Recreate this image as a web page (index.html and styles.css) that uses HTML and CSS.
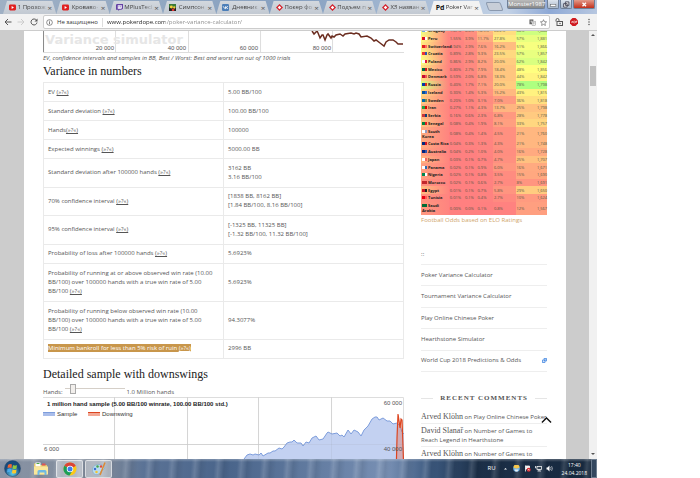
FILE: index.html
```html
<!DOCTYPE html>
<html lang="en">
<head>
<meta charset="utf-8">
<title>Poker Variance Calculator</title>
<link rel="stylesheet" href="styles.css">
</head>
<body>
<div class="desktop">
  <header class="tabbar">
    <nav class="tabs">
      <div class="tab"><svg class="fav" viewBox="0 0 12 12"><rect y="1" width="12" height="10" rx="2" fill="#e02020"/><path d="M4.5 3.5v5l4-2.500z" fill="#fff"/></svg><span class="tab-title">1 Прохож</span><button class="x" aria-label="Close">×</button></div>
      <div class="tab"><svg class="fav" viewBox="0 0 12 12"><rect y="1" width="12" height="10" rx="2" fill="#e02020"/><path d="M4.500 3.500v5l4-2.500z" fill="#fff"/></svg><span class="tab-title">Кроваво-</span><button class="x" aria-label="Close">×</button></div>
      <div class="tab"><svg class="fav" viewBox="0 0 12 12"><path d="M1 0h11v8l-3 2H6l-2 2V10H0V2z" fill="#6441a5"/><path d="M3 2h7v5L9 8H3z" fill="#fff"/><path d="M5 3v3M8 3v3" stroke="#6441a5"/></svg><span class="tab-title">MPlusTecl</span><button class="x" aria-label="Close">×</button></div>
      <div class="tab"><svg class="fav" viewBox="0 0 12 12"><rect width="12" height="12" fill="#3a7a3a"/><rect y="6" width="12" height="6" fill="#222"/><circle cx="4" cy="5" r="2.500" fill="#f4d03a"/><circle cx="9" cy="6" r="2" fill="#f4d03a"/><rect x="5" y="8" width="4" height="4" fill="#d33"/></svg><span class="tab-title">Симпсон</span><button class="x" aria-label="Close">×</button></div>
      <div class="tab"><svg class="fav" viewBox="0 0 12 12"><rect width="12" height="12" rx="2" fill="#4d7fb8"/><path d="M2 4l3 4h1V4M10 4L7 6l3 2" fill="none" stroke="#fff" stroke-width="1.500"/></svg><span class="tab-title">Дневник</span><button class="x" aria-label="Close">×</button></div>
      <div class="tab"><svg class="fav" viewBox="0 0 12 12"><path d="M6 0l6 6-6 6-6-6z" fill="#d3202a"/><path d="M6 3l3 3-3 3-3-3z" fill="#fff"/></svg><span class="tab-title">Покер фо</span><button class="x" aria-label="Close">×</button></div>
      <div class="tab"><svg class="fav" viewBox="0 0 12 12"><path d="M6 0l6 6-6 6-6-6z" fill="#d3202a"/><path d="M6 3l3 3-3 3-3-3z" fill="#fff"/></svg><span class="tab-title">Подъем п</span><button class="x" aria-label="Close">×</button></div>
      <div class="tab"><svg class="fav" viewBox="0 0 12 12"><path d="M6 0l6 6-6 6-6-6z" fill="#d3202a"/><path d="M6 3l3 3-3 3-3-3z" fill="#fff"/></svg><span class="tab-title">ХЗ назван</span><button class="x" aria-label="Close">×</button></div>
      <div class="tab active"><b class="pd">Pd</b><span class="tab-title">Poker Var</span><button class="x" aria-label="Close">×</button></div>
    </nav>
    <button class="newtab" aria-label="New tab"></button>
    <div class="winbtns">
      <button class="user">Monster1987</button>
      <button class="wb" aria-label="Minimize"><svg viewBox="0 0 12 8"><rect x="3" y="4" width="6" height="2" fill="#fff" stroke="#555" stroke-width=".5"/></svg></button>
      <button class="wb" aria-label="Restore"><svg viewBox="0 0 12 8"><path d="M5 1h4v4H5zM3 3h4v4H3z" fill="#eee" stroke="#445"/></svg></button>
      <button class="wb close" aria-label="Close window"><svg viewBox="0 0 12 8"><path d="M4 2l4 4M8 2L4 6" stroke="#fff" stroke-width="1.500"/></svg></button>
    </div>
  </header>
  <div class="toolbar">
    <button class="tool" aria-label="Back"><svg viewBox="0 0 16 16"><path d="M15 8H3M8 2L2 8l6 6" fill="none" stroke="#555" stroke-width="2"/></svg></button>
    <button class="tool" aria-label="Forward"><svg viewBox="0 0 16 16"><path d="M1 8h12M8 2l6 6-6 6" fill="none" stroke="#ccc" stroke-width="2"/></svg></button>
    <button class="tool" aria-label="Reload"><svg viewBox="0 0 16 16"><path d="M13 4.500A6 6 0 1 0 14 9" fill="none" stroke="#555" stroke-width="2"/><path d="M15 1v6H9z" fill="#555"/></svg></button>
    <div class="omnibox">
      <svg class="info" viewBox="0 0 16 16"><circle cx="8" cy="8" r="6.500" fill="none" stroke="#555" stroke-width="1.500"/><path d="M8 7v5M8 4v2" stroke="#555" stroke-width="1.800"/></svg>
      <label for="url">Не защищено</label>
      <input id="url" type="text" value="www.pokerdope.com/poker-variance-calculator/">
      <svg class="info" viewBox="0 0 16 16"><rect x="1" y="1" width="9" height="11" fill="#666"/><rect x="7" y="5" width="8" height="10" fill="#fff" stroke="#777"/><path d="M3 5h5M5.500 4v5" stroke="#fff"/><path d="M9 9h4M11 7v6" stroke="#777"/></svg>
      <svg class="info" viewBox="0 0 16 16"><path d="M8 1.500l2 4.500 5 .5-3.700 3.300 1 5L8 12.300l-4.300 2.500 1-5L1 6.500 6 6z" fill="none" stroke="#555" stroke-width="1.400"/></svg>
    </div>
    <div class="extensions">
    <button class="tool" aria-label="Unlock"><svg viewBox="0 0 16 16"><path d="M2 7V4a3 3 0 0 1 6 0v3" fill="none" stroke="#555" stroke-width="1.800"/><rect x="4" y="7" width="11" height="8" fill="none" stroke="#555" stroke-width="2"/><circle cx="10" cy="11" r="1.500" fill="#555"/></svg></button>
    <button class="tool" aria-label="Ad block"><svg viewBox="0 0 16 16"><path d="M5 0h6l5 5v6l-5 5H5l-5-5V5z" fill="#cf1a20"/><path d="M3 10l1.500-4L6 10M7.500 6v4h1.500a1 1 0 0 0 0-4zM12 10V6h1.500v2H12" fill="none" stroke="#fff"/></svg></button>
    <button class="tool" aria-label="Menu"><svg viewBox="0 0 16 16"><g fill="#555"><circle cx="8" cy="3" r="1.500"/><circle cx="8" cy="8" r="1.500"/><circle cx="8" cy="13" r="1.500"/></g></svg></button>
    </div>
  </div>

  <div class="viewport">
    <div class="paper">
      <main>
        <svg class="chart" viewBox="0 0 361 22">
          <path d="M72.500 0v21M145.500 0v21M217.500 0v21M289.500 0v21" stroke="#ddd"/>
          <path d="M.5 0v22" stroke="#888"/><path d="M0 21.500h361" stroke="#ddd"/>
          <text x="2" y="13" class="mark">Variance simulator</text>
          <g class="axis" text-anchor="end"><text x="71" y="19">20 000</text><text x="143" y="19">40 000</text><text x="215" y="19">60 000</text><text x="288" y="19">80 000</text></g>
          <path d="M269 0l2 3 3-3 1 2 2 5 2-3 1 0 2 5 2-5 1-1 3 4 1-2 2 1 2-2 4-1 3 2 2-2 6-1 3 1 2-1 3 1 2 3 6-1 4 2 3 3 2-1 4 3 4 3 2-4 3-2 4 0 3 2 2 2 5 0" fill="none" stroke="#6b2d20" stroke-width="1.500"/>
        </svg>
        <p class="note">EV, confidence intervals and samples in BB, Best / Worst: Best and worst run out of 1000 trials</p>
        <h2>Variance in numbers</h2>
        <table class="numbers">
          <tr><td>EV <a href="#ev">(»?«)</a></td><td>5.00 BB/100</td></tr>
          <tr><td>Standard deviation <a href="#sd">(»?«)</a></td><td>100.00 BB/100</td></tr>
          <tr><td>Hands<a href="#hands">(»?«)</a></td><td>100000</td></tr>
          <tr><td>Expected winnings <a href="#ew">(»?«)</a></td><td>5000.00 BB</td></tr>
          <tr><td>Standard deviation after 100000 hands <a href="#sdh">(»?«)</a></td><td>3162 BB<br>3.16 BB/100</td></tr>
          <tr><td>70% confidence interval <a href="#c70">(»?«)</a></td><td>[1838 BB, 8162 BB]<br>[1.84 BB/100, 8.16 BB/100]</td></tr>
          <tr><td>95% confidence interval <a href="#c95">(»?«)</a></td><td>[-1325 BB, 11325 BB]<br>[-1.32 BB/100, 11.32 BB/100]</td></tr>
          <tr><td>Probability of loss after 100000 hands <a href="#loss">(»?«)</a></td><td>5.6923%</td></tr>
          <tr><td>Probability of running at or above observed win rate (10.00 BB/100) over 100000 hands with a true win rate of 5.00 BB/100 <a href="#above">(»?«)</a></td><td>5.6923%</td></tr>
          <tr><td>Probability of running below observed win rate (10.00 BB/100) over 100000 hands with a true win rate of 5.00 BB/100 <a href="#below">(»?«)</a></td><td>94.3077%</td></tr>
          <tr><td><span class="picked">Minimum bankroll for less than 5% risk of ruin <a href="#ruin">(»?«)</a></span></td><td>2996 BB</td></tr>
        </table>
        <h2 class="second">Detailed sample with downswings</h2>
        <div class="hands">
          <label for="hands-range">Hands:</label>
          <input id="hands-range" type="range" min="0" max="10" value="1" step="0.1">
          <span>1.0 Million hands</span>
        </div>
        <svg class="chart" viewBox="0 0 361 80">
          <path d="M71.500 0v80M144.500 0v80M215.500 0v80M288.500 0v80M0 47.500h361M0 .5h360.500V80" fill="none" stroke="#ddd"/>
          <path id="area" d="M200 63l1-1 3-4 3-1 3 1 2-1 4 1 2-2 2 3 5-3 2 0 3-2 2 0 4-3 3 1 2-2 3-4 3-1 2 0 2-2 3 3 4 0 2 3 3-4 3 1 3-5 2-1 2-1 3 4 4-1 4-6 1-1 4 2 5-1 3 3 2-1 2 2 4-7 3 4 3-4 4 2 3 4 3-6 4-4 4-7 3-2 2 0 2 3 4-2 4 3 3 0 3 3 4-1 3 3 2 6 2 2 3-1 1-3V80H200z" fill="#c3d1f1" stroke="#7d9ddc"/>
          <path d="M353 80l1-40 1-23 2 14 1-9 1 1 1 27 1 30z" fill="#e86848" fill-opacity=".35" stroke="#dc4520" stroke-width="1.200"/>
          <path d="M71.500 0v80M144.500 0v80M215.500 0v80M288.500 0v80M0 47.500h361" stroke="#888" stroke-opacity=".1"/>
          <text class="ctitle" x="4" y="9">1 million hand sample (5.00 BB/100 winrate, 100.00 BB/100 std.)</text>
          <rect y="15" width="12" height="4" fill="#a9bdea"/><path d="M0 15.500h12" stroke="#7d9ddc"/>
          <rect x="45" y="15" width="12" height="4" fill="#f3a894"/><path d="M45 15.500h12" stroke="#dc4520"/>
          <g class="axis dark"><text x="14" y="19">Sample</text><text x="59" y="19">Downswing</text></g>
          <g class="axis"><text x="1" y="54">6 000</text><text x="359" y="8" text-anchor="end">60 000</text><text x="359" y="54" text-anchor="end">40 000</text></g>
        </svg>
      </main>

      <aside>
        <table class="elo"><tbody id="elo"></tbody></table>
        <a class="elo-link" href="#elo">Football Odds based on ELO Ratings</a>
        <p class="menu-mark">::</p>
        <ul class="menu">
          <li><a href="#pvc">Poker Variance Calculator</a></li>
          <li><a href="#tvc">Tournament Variance Calculator</a></li>
          <li><a href="#ofc">Play Online Chinese Poker</a></li>
          <li><a href="#hs">Hearthstone Simulator</a></li>
          <li><a href="#wc">World Cup 2018 Predictions &amp; Odds</a><svg class="ext" viewBox="0 0 12 12"><path d="M5 1h6v6H5z" fill="#fff" stroke="#3b82e0" stroke-width="2"/><path d="M1 5h6v6H1z" fill="#fff" stroke="#3b82e0" stroke-width="2"/><path d="M4 8l5-5" stroke="#3b82e0" stroke-width="1.500"/></svg></li>
        </ul>
        <h3>Recent Comments</h3>
        <ul class="comments">
          <li><b>Arved Klöhn</b> on <a href="#c1">Play Online Chinese Poker</a><button class="totop" aria-label="Back to top"><svg viewBox="0 0 12 7"><path d="M1 6l5-5 5 5" fill="none" stroke="#111" stroke-width="1.500"/></svg></button></li>
          <li><b>David Slanař</b> on <a href="#c2">Number of Games to Reach Legend in Hearthstone</a></li>
          <li><b>Arved Klöhn</b> on <a href="#c3">Number of Games to Reach Legend in Hearthstone</a></li>
        </ul>
      </aside>
    </div>
    <div class="scroll"><i class="up"></i><i class="thumb"></i><i class="down"></i></div>
  </div>

  <footer class="taskbar">
    <button class="orb" aria-label="Start"><svg viewBox="0 0 34 34"><defs><radialGradient id="orb" cy=".8"><stop offset="0" stop-color="#5fd0f0"/><stop offset="1" stop-color="#174a7c"/></radialGradient></defs><circle cx="17" cy="17" r="16" fill="url(#orb)" stroke="#24466b"/><path d="M8 10q4-3 8-1l-1 7q-4-2-8 0z" fill="#ee6535"/><path d="M18 10q4 2 8 0l-1 7q-4 2-8 0z" fill="#8fc93e"/><path d="M7 18q4-2 8 0l-1 7q-4-2-8 0z" fill="#4aa9e8"/><path d="M17 19q4 2 8 0l-1 7q-4 2-8 0z" fill="#fbc82e"/></svg></button>
    <button class="task" aria-label="Explorer"><svg viewBox="0 0 32 28"><path d="M2 3h10l2 3h14v19H2z" fill="#e5c86a"/><rect x="5" y="1" width="10" height="8" fill="#fff"/><rect x="7" y="2" width="6" height="2" fill="#4aa94a"/><rect x="18" y="3" width="7" height="4" fill="#d55"/><path d="M2 9h28v16H2z" fill="#fae79a"/><path d="M9 26v-7q0-3 3-3h12q3 0 3 3v7h-4v-5H13v5z" fill="#6fb9e3"/></svg></button>
    <button class="task open" aria-label="Chrome"><svg viewBox="0 0 28 28"><circle cx="14" cy="14" r="13" fill="#fbc916"/><path d="M14 14L2.700 7.500A13 13 0 0 1 25.300 7.500z" fill="#dc4437"/><path d="M14 14L2.700 7.500A13 13 0 0 0 13 27l6-10z" fill="#1b9e58"/><path d="M14 7.500h11.300L14 14z" fill="#dc4437"/><circle cx="14" cy="14" r="6.500" fill="#fff"/><circle cx="14" cy="14" r="5" fill="#3f7fe8"/></svg></button>
    <button class="task open" aria-label="Paint"><svg viewBox="0 0 32 28"><path d="M3 15C3 7 14 3 22 6s6 8 1 10-3 8-10 9S3 21 3 15z" fill="#b9dcf0" stroke="#6e9fc2"/><circle cx="8" cy="14" r="2.500" fill="#3b6fd0"/><circle cx="13" cy="9" r="2.500" fill="#47a64b"/><circle cx="20" cy="9" r="2.500" fill="#e04a3a"/><circle cx="11" cy="20" r="2.500" fill="#f1c431"/><path d="M28 1L18 26" stroke="#dc8a35" stroke-width="3"/></svg></button>
    <div class="tray">
      <span class="lang">RU</span>
      <svg viewBox="0 0 14 14"><path d="M4 9l3-3 3 3z" fill="#fff"/></svg>
      <svg viewBox="0 0 14 14"><circle cx="7" cy="7" r="6.500" fill="#6db2e6"/><path d="M1 5a6 6 0 0 1 12 0q-6 4-12 0z" fill="#f7c64a"/><path d="M3 9h8l-2 4H5z" fill="#e8eef4"/></svg>
      <svg viewBox="0 0 14 14"><path d="M3 1v12M3 2h8v6H3" fill="#eee" stroke="#fff" stroke-width="1.500"/><circle cx="9.500" cy="9.500" r="4" fill="#d6262b"/><path d="M8 8l3 3M11 8l-3 3" stroke="#fff"/></svg>
      <svg viewBox="0 0 14 14"><rect x="4" y="3" width="9" height="6" fill="#345" stroke="#fff" stroke-width="1.500"/><path d="M1 2v4h2M8 9v3M5 12h7" fill="none" stroke="#fff" stroke-width="1.500"/></svg>
      <svg viewBox="0 0 14 14"><path d="M1 5h2l4-4v12L3 9H1z" fill="#fff"/><path d="M9 4q2 3 0 6M11 2q4 5 0 10" fill="none" stroke="#fff"/></svg>
      <time class="clock">17:40<br>24.04.2018</time>
      <button class="peek" aria-label="Show desktop"></button>
    </div>
  </footer>
</div>
<script src="script.js"></script>
</body>
</html>
```
FILE: styles.css
```css
* { box-sizing: border-box; }
body { margin: 0; background: #fff; font: 6px/9px "Open Sans", "Noto Sans", sans-serif; color: #555; }
button { border: 0; padding: 0; background: none; font: inherit; color: inherit; }
a { color: inherit; text-decoration: none; }
ul { list-style: none; margin: 0; padding: 0; }
svg { display: block; }
.desktop { width: 85.3%; height: 100vh; display: flex; flex-direction: column; }

.tabbar { flex: none; height: 14px; display: flex; align-items: flex-end; padding-left: 3px; background: linear-gradient(90deg, #9fb0c4, #86a0c0 50%, #c3d2e6 85%, #8ea9d6 92%, #b7c7e0); }
.tabs { flex: 0 1 480px; min-width: 0; display: flex; }
.tab { flex: 1 1 0; min-width: 0; height: 13px; display: flex; align-items: center; justify-content: space-between; padding: 0 4px 0 6px; background: linear-gradient(#d3d8de, #c2c9d2); clip-path: polygon(4px 0, calc(100% - 4px) 0, 100% 100%, 0 100%); color: #444; }
.tab.active { background: #f2f2f2; color: #333; }
.fav { width: 7px; height: 7px; flex: none; }
.pd { font-size: 7px; color: #111; }
.tab-title { white-space: nowrap; -webkit-mask-image: linear-gradient(90deg, #000 70%, #0004); mask-image: linear-gradient(90deg, #000 70%, #0004); }
.x { width: 5px; font-size: 8px; color: #555; }
.newtab { width: 15px; height: 9px; margin: 0 0 3px 4px; background: #c8ced8; border: 1px solid #8b99ae; transform: skewX(20deg); border-radius: 2px; }
.winbtns { margin-left: auto; align-self: flex-start; display: flex; gap: 1px; padding-right: 2px; }
.winbtns button { height: 9px; border: 1px solid #6f7f96; border-top: 0; border-radius: 0 0 2px 2px; background: linear-gradient(#dde4ee, #a9b7ca); }
.winbtns .user { width: 38px; line-height: 8px; background: linear-gradient(#bbb, #888); color: #fff; margin-right: 1px; }
.winbtns .wb { width: 12px; }
.winbtns .wb svg { height: 7px; margin: auto; }
.winbtns .close { width: 22px; background: linear-gradient(#e39a8a, #c2301c); }

.toolbar { flex: none; height: 17px; display: flex; align-items: center; gap: 5px; padding: 0 4px; background: #f2f2f2; border-bottom: 1px solid #ccc; }
.tool { width: 8px; height: 8px; flex: none; }
.extensions { display: flex; gap: 7px; }
.omnibox { flex: 1; height: 14px; display: flex; align-items: center; gap: 4px; padding: 0 2px; background: #fff; border: 1px solid #ccc; border-radius: 2px; }
.info { width: 7px; height: 7px; flex: none; }
.omnibox label { padding-right: 4px; border-right: 1px solid #ddd; color: #333; }
.omnibox input { flex: 1; min-width: 0; border: 0; padding: 0; outline: 0; font: 6px/10px "Open Sans", sans-serif; color: transparent; background: linear-gradient(90deg, #222 58px, #888 58px); -webkit-background-clip: text; background-clip: text; }

.viewport { flex: 1; min-height: 0; display: flex; background: #ccc; overflow: hidden; }
.paper { flex: 1; min-width: 0; align-self: stretch; margin: 0 23px 0 24px; padding: 0 19px; background: #fff; display: grid; grid-template-columns: 361fr 126fr; gap: 17px; align-items: start; }
main, aside { min-width: 0; }
.chart { width: 100%; }
.mark { font: bold 13px "DejaVu Sans", sans-serif; fill: #e6e6e6; }
.axis { font: 6px "Liberation Sans", sans-serif; fill: #555; }
.dark { fill: #333; }
.ctitle { font: bold 6px "Liberation Sans", sans-serif; fill: #222; }
.note { margin: 0; font-style: italic; line-height: 10px; white-space: nowrap; }
h2 { margin: 0 0 3px; font: 12px/16px "Liberation Serif", serif; color: #222; white-space: nowrap; }
h2.second { margin: 7px 0 0; }
.numbers { width: 100%; height: 277px; table-layout: fixed; border-collapse: collapse; }
.numbers td { border: 1px solid #eaeaea; padding: 4px; vertical-align: middle; }
.numbers a { text-decoration: underline; text-underline-offset: 1px; }
.picked { background: #c8964b; color: #fff; }
.hands { height: 15px; display: flex; align-items: flex-end; gap: 2px; }
.hands input { -webkit-appearance: none; appearance: none; width: 60px; height: 12px; margin: 0 0 2px; background: linear-gradient(#d5cfc8, #d5cfc8) center 5px / 100% 1px no-repeat; }
.hands input::-webkit-slider-thumb { -webkit-appearance: none; width: 6px; height: 10px; background: #f2efec; border: 1px solid #aaa; }

.elo { width: 100%; height: 188px; margin-top: -4px; table-layout: fixed; border-collapse: collapse; font-size: 4px; line-height: 5px; color: #554; }
.elo td { padding: 1px 0 1px 1px; white-space: nowrap; }
.elo .team { width: 22%; font-weight: bold; color: #222; }
.elo td:nth-child(2) { width: 12%; }
.elo td:nth-child(3) { width: 10%; }
.elo td:nth-child(4) { width: 13%; }
.elo td:nth-child(5) { width: 18%; }
.elo td:nth-child(6) { width: 15%; }
.elo td:last-child { width: 10%; text-align: right; }
.flag { display: inline-block; width: 5px; height: 3px; margin-right: 1px; }
.elo-link { display: block; line-height: 10px; color: #cfa56c; white-space: nowrap; }
.menu-mark { margin: 19px 0 0; height: 21px; line-height: 20px; border-bottom: 1px solid #eee; }
.menu { min-height: 107px; display: flex; flex-direction: column; }
.menu li { flex: 1; display: flex; align-items: center; justify-content: space-between; border-bottom: 1px solid #eee; white-space: nowrap; }
.ext { width: 5px; height: 5px; }
h3 { display: flex; align-items: center; gap: 7px; margin: 20px 0 6px; font: bold 7px/12px "Liberation Serif", serif; letter-spacing: 1px; text-transform: uppercase; color: #555; white-space: nowrap; }
h3::before, h3::after { content: ""; flex: 1; height: 1px; background: #e5e5e5; }
.comments li { position: relative; padding: 3px 0 1px; border-bottom: 1px solid #eee; line-height: 9px; }
.comments b { font: 8px/8px "Liberation Serif", serif; }
.totop { position: absolute; right: -5px; top: 7px; width: 11px; height: 7px; }
.scroll { width: 8px; flex: none; display: flex; flex-direction: column; align-items: center; background: #f1f1f1; }
.up, .down { border: 2px solid transparent; }
.up { margin-top: 1px; border-bottom-color: #555; }
.thumb { width: 6px; height: 20px; margin-top: 30px; background: #c1c1c1; }
.down { margin: auto 0 2px; border-top-color: #555; }

.taskbar { flex: none; height: 19px; display: flex; align-items: center; padding-left: 4px; gap: 2px; background: linear-gradient(#fff4, #fff0 3px), repeating-linear-gradient(94deg, #fff0 0 7px, #fff2 11px, #0001 17px, #fff0 23px), linear-gradient(90deg, #8a94a5, #7b8798 18%, #5b7396 24%, #49648a 38%, #7890b4 65%, #3d5a80 72%, #1c3049 80%, #16283d); }
.orb { width: 17px; height: 17px; margin-right: 4px; }
.task { width: 27px; height: 18px; border-radius: 2px; }
.task svg { height: 14px; margin: auto; }
.task.open { background: #ffffff66; border: 1px solid #ffffff88; }
.tray { margin-left: auto; display: flex; align-items: center; align-self: stretch; gap: 4px; color: #fff; }
.tray svg { width: 7px; height: 7px; }
.lang { margin-right: 2px; }
.clock { margin-left: 5px; text-align: center; font-size: 5px; line-height: 8px; }
.peek { width: 6px; align-self: stretch; border: 1px solid #6d7d90; background: #33475f; }
```
FILE: script.js
```js
const teams = [
  ["Uruguay", "#75aadb", "#fff", "1.47%", "4.6%", "14.5%", "24.2%", "66%", "1,888"],
  ["Peru", "#d91023", "#fff", "1.55%", "3.9%", "11.7%", "27.8%", "57%", "1,881"],
  ["Switzerland", "#e02020", "#f66", "0.94%", "2.9%", "7.6%", "16.2%", "51%", "1,866"],
  ["Croatia", "#e33", "#3355aa", "0.89%", "2.8%", "9.3%", "23.5%", "57%", "1,857"],
  ["Poland", "#fff", "#dc143c", "0.86%", "2.9%", "8.2%", "20.0%", "62%", "1,842"],
  ["Mexico", "#006847", "#ce1126", "0.80%", "2.7%", "7.9%", "18.4%", "48%", "1,856"],
  ["Denmark", "#c60c30", "#e55", "0.59%", "2.0%", "6.8%", "18.3%", "44%", "1,842"],
  ["Russia", "#0039a6", "#d52b1e", "0.40%", "1.7%", "7.1%", "20.0%", "78%", "1,798"],
  ["Iceland", "#02529c", "#36c", "0.30%", "1.4%", "5.3%", "15.2%", "43%", "1,815"],
  ["Sweden", "#006aa7", "#7a8a50", "0.20%", "1.0%", "3.1%", "7.0%", "36%", "1,818"],
  ["Iran", "#239f40", "#da0000", "0.27%", "1.1%", "4.3%", "13.7%", "25%", "1,798"],
  ["Serbia", "#c6363c", "#0c4076", "0.16%", "0.6%", "2.3%", "6.8%", "28%", "1,778"],
  ["Senegal", "#00853f", "#e31b23", "0.08%", "0.4%", "1.9%", "8.1%", "33%", "1,757"],
  ["South\nKorea", "#fff", "#99b", "0.08%", "0.4%", "1.4%", "4.5%", "21%", "1,760"],
  ["Costa Rica", "#002b7f", "#ce1126", "0.04%", "0.3%", "1.3%", "4.3%", "21%", "1,748"],
  ["Australia", "#00247d", "#35a", "0.04%", "0.2%", "1.0%", "4.0%", "16%", "1,728"],
  ["Japan", "#fff", "#e66", "0.03%", "0.1%", "0.7%", "4.7%", "25%", "1,707"],
  ["Panama", "#fff", "#36a", "0.02%", "0.1%", "0.9%", "6.0%", "16%", "1,671"],
  ["Nigeria", "#008751", "#fff", "0.02%", "0.1%", "0.8%", "3.5%", "15%", "1,690"],
  ["Morocco", "#c1272d", "#c1272d", "0.02%", "0.1%", "0.6%", "2.7%", "8%", "1,691"],
  ["Egypt", "#ce1126", "#222", "0.01%", "0.1%", "0.7%", "5.8%", "29%", "1,650"],
  ["Tunisia", "#e70013", "#f55", "0.01%", "0.1%", "0.4%", "2.7%", "10%", "1,624"],
  ["Saudi\nArabia", "#006c35", "#006c35", "0.00%", "0.0%", "0.1%", "0.8%", "12%", "1,567"]
];
const color = hue => `hsl(${Math.round(hue)} 100% 75%)`;
const body = document.getElementById("elo");
for (const [name, c1, c2, ...vals] of teams) {
  const row = body.insertRow();
  const pass = parseFloat(vals[4]) * 1.25;
  const team = row.insertCell();
  team.className = "team";
  team.style.background = `linear-gradient(90deg, ${color(pass * 0.8)}, ${color(2)})`;
  const flag = document.createElement("span");
  flag.className = "flag";
  flag.style.background = `linear-gradient(90deg, ${c1} 50%, ${c2} 50%)`;
  const [first, second] = name.split("\n");
  team.append(flag, first);
  if (second) team.append(document.createElement("br"), second);
  vals.forEach((v, i) => {
    const cell = row.insertCell();
    cell.textContent = v;
    cell.style.background = color(i > 3 ? pass : parseFloat(v) * 1.8);
  });
}
```
